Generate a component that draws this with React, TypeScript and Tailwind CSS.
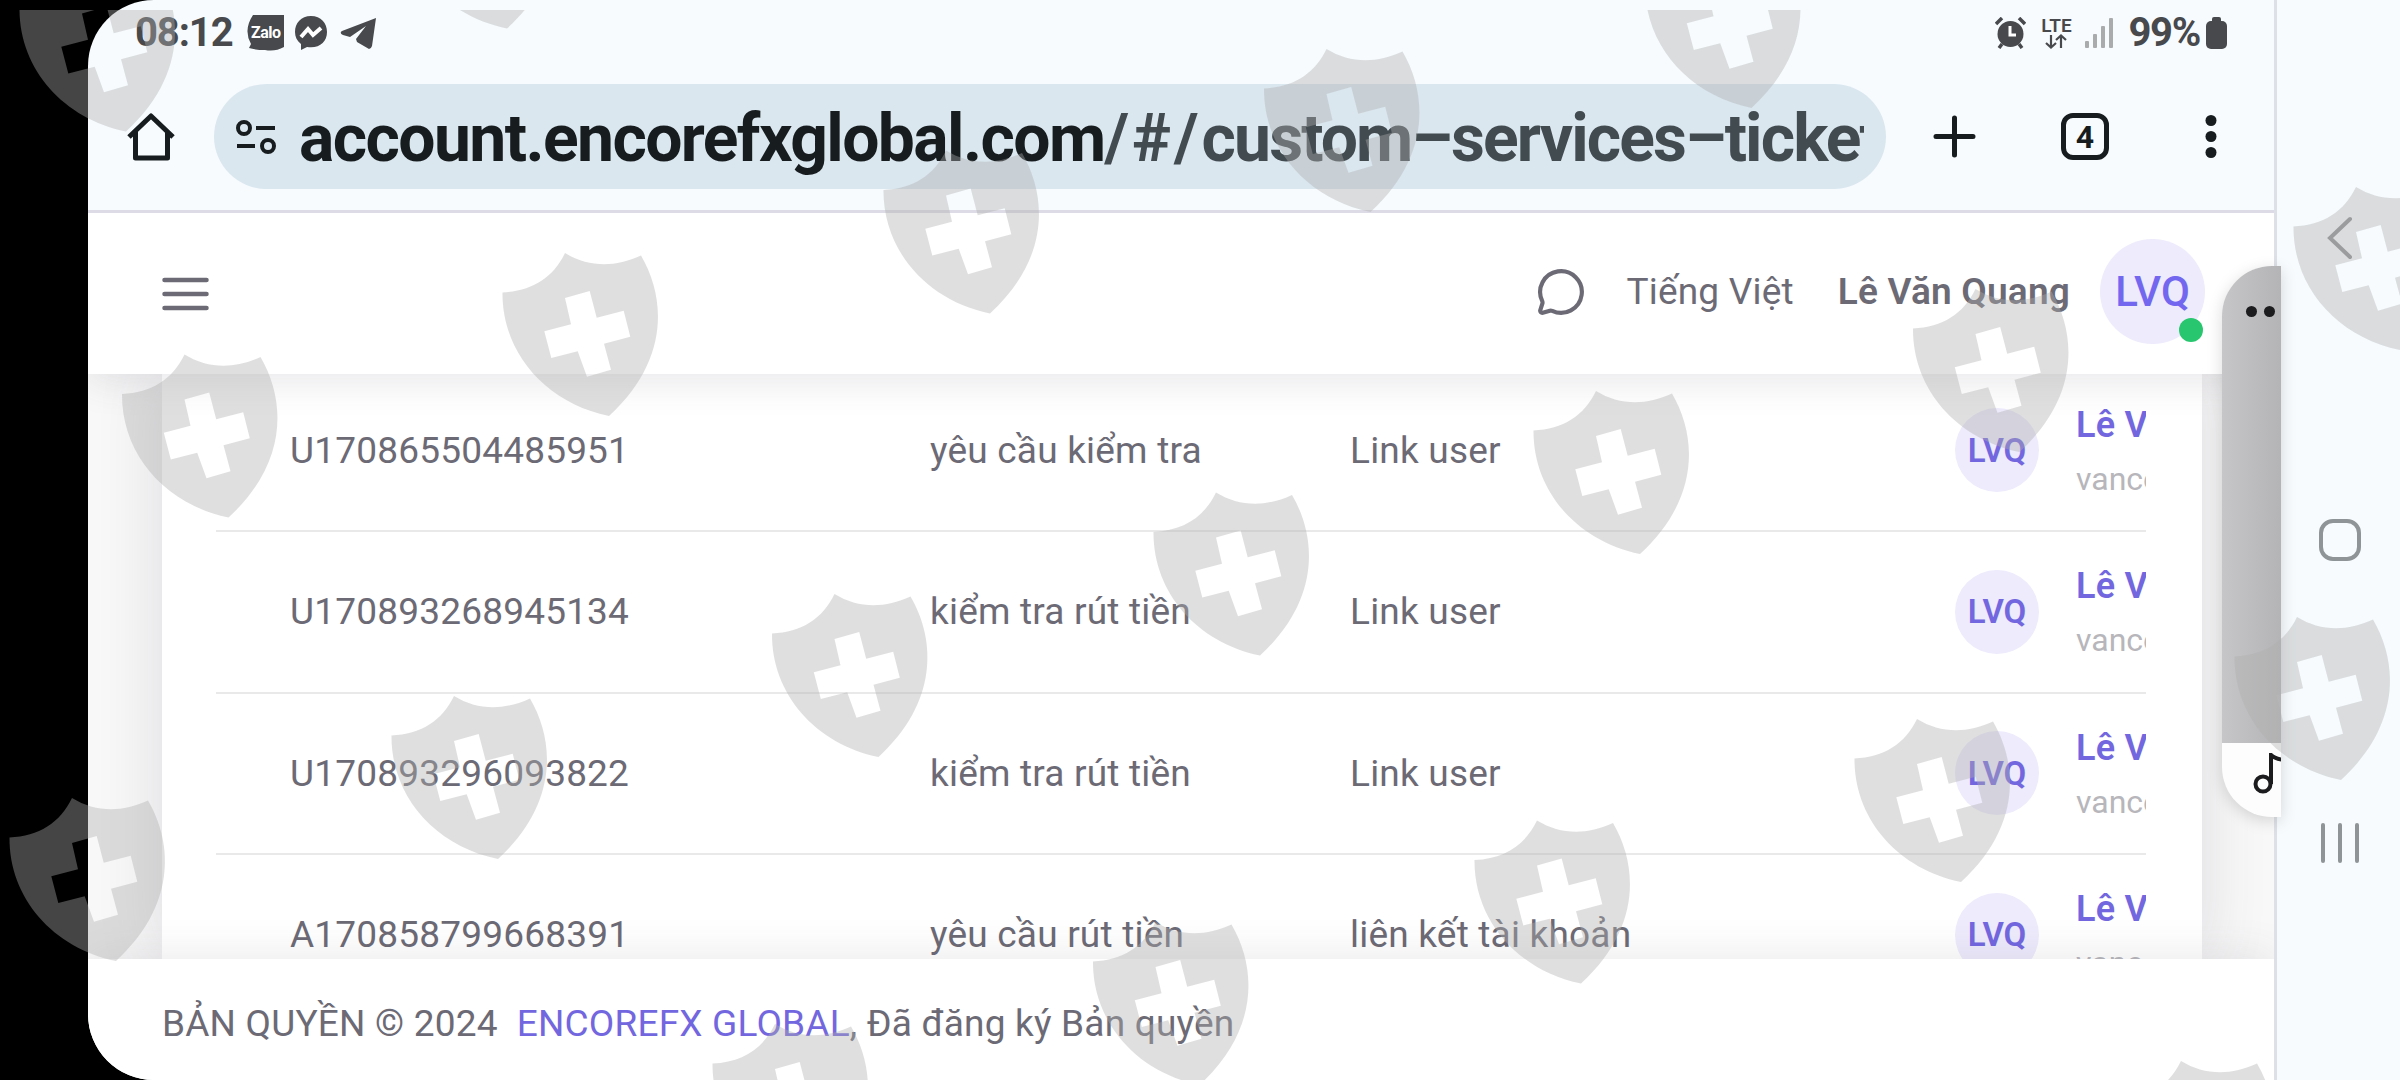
import { MessageCircle } from "lucide-react";

interface Ticket {
  id: string;
  subject: string;
  category: string;
}

const tickets: Ticket[] = [
  { id: "U170865504485951", subject: "yêu cầu kiểm tra", category: "Link user" },
  { id: "U170893268945134", subject: "kiểm tra rút tiền", category: "Link user" },
  { id: "U170893296093822", subject: "kiểm tra rút tiền", category: "Link user" },
  { id: "A170858799668391", subject: "yêu cầu rút tiền", category: "liên kết tài khoản" },
];

// bottom tip of every shield, in screen pixels
const shields = [
  [126, 131.5], [507, 28.5], [1751.5, 108],
  [228.5, 517.5], [609, 416], [990, 313.5], [1370.5, 212],
  [116, 961], [498, 859], [878.5, 757], [1260, 655.5], [1640, 554], [2019.5, 452], [2400, 350],
  [819, 1187], [1199.5, 1085], [1581, 983.5], [1961, 882], [2341, 780],
  [2225, 1224],
];

const ShieldPattern = () => (
  <svg className="pointer-events-none absolute inset-0 z-30 h-[1080px] w-[2400px]" viewBox="0 0 2400 1080">
    <defs>
      <clipPath id="below-edge">
        <rect x="0" y="10" width="2400" height="1070" />
      </clipPath>
      <path
        id="shield"
        fillRule="evenodd"
        d="M12.500 52.500C42 51 63 38 75 13C98 27 124 28 151 15.500C177 60 178 122 119 176C56 163 12 113 12.500 52.500ZM75 58L81 84.300L54.300 91.300L61.300 118L87.700 111.300L97 136.700L121 129.700L114 103.700L140.300 96.700L133.700 70.700L106.700 77.700L99.700 51Z"
      />
    </defs>
    <g clipPath="url(#below-edge)" fill="#aeaeae" fillOpacity="0.396">
      {shields.map(([x, y]) => (
        <use key={`${x}-${y}`} href="#shield" x={x - 119} y={y - 176} />
      ))}
    </g>
  </svg>
);

const StatusBar = () => (
  <div className="flex h-[66px] items-center px-[47px] text-[#47494c]">
    <span className="w-[98px] text-[40px] font-bold leading-none tracking-[-1.1px]">08:12</span>
    <svg className="ml-[14px] h-9 w-[37px]" viewBox="0 0 37 36">
      <path fill="#47494c" d="M6 0H37V32Q28 37 18 35Q9 35 2 33L4 29Q-4 15 6 0Z" />
      <text x="4" y="23" fill="#fff" fontSize="16" fontWeight="700" textLength="30">Zalo</text>
    </svg>
    <svg className="ml-[10px] h-[34px] w-[34px]" viewBox="0 0 34 34">
      <path fill="#47494c" d="M17 0C7 0 1 7 1 16C1 21 3 25 7 28V34L13 31C25 33 33 26 33 16C33 7 27 0 17 0Z" />
      <path fill="none" stroke="#fff" strokeWidth="4" d="M7 21L14 13L19 19L27 12" />
    </svg>
    <svg className="ml-[12px] h-[34px] w-[37px]" viewBox="0 0 37 34">
      <path fill="#47494c" d="M36 2L2 15Q-1 17 3 19L10 21L26 10L16 23L17 26L29 33Q31 33 32 30Z" />
    </svg>
    <div className="ml-auto flex items-center">
      <svg className="h-8 w-[31px]" viewBox="0 0 31 32">
        <circle cx="15.500" cy="17" r="13" fill="#47494c" />
        <path fill="none" stroke="#47494c" strokeWidth="3.500" d="M1 7L7 1M30 7L24 1M7 27L4 31M24 27L27 31" />
        <path fill="none" stroke="#fff" strokeWidth="3" d="M15 9V18H21" />
      </svg>
      <div className="ml-[14px] flex w-[32px] flex-col items-center">
        <span className="text-[19px] font-semibold leading-[17px]">LTE</span>
        <svg className="h-[15px] w-[24px]" viewBox="0 0 24 15">
          <path fill="none" stroke="#47494c" strokeWidth="2.200" d="M7 1V13M2 9L7 13.500L12 9M17 14V2M12 6L17 1.500L22 6" />
        </svg>
      </div>
      <svg className="ml-[13px] h-[30px] w-[28px]" viewBox="0 0 28 30" fill="#a9abad">
        <rect x="0" y="23" width="4" height="7" rx="1" />
        <rect x="8" y="16" width="4" height="14" rx="1" />
        <rect x="16" y="8" width="4" height="22" rx="1" />
        <rect x="24" y="0" width="4" height="30" rx="1" />
      </svg>
      <span className="ml-[15px] text-[40px] font-bold leading-none tracking-[-1.3px]">99%</span>
      <svg className="ml-[6px] h-8 w-[21px]" viewBox="0 0 21 32" fill="#47494c">
        <rect x="6" y="0" width="9" height="8" rx="2" />
        <rect x="0" y="4" width="21" height="28" rx="5" />
      </svg>
    </div>
  </div>
);

const AddressBar = () => (
  <div className="relative z-20 flex h-[144px] items-start bg-[#f7fbfe] pt-[18px] text-[#171c1f]">
    <svg className="ml-[39px] mt-[28px] h-[50px] w-[48px]" viewBox="0 0 48 50" fill="none" stroke="#171c1f" strokeWidth="5" strokeLinejoin="round">
      <path d="M2 25L24 4L46 25M8.500 20V46H40.500V20" />
    </svg>
    <div className="ml-[39px] flex h-[105px] w-[1672px] items-center rounded-full bg-[#dae7ef]">
      <svg className="ml-[22px] h-[34px] w-[40px]" viewBox="0 0 40 34" fill="none" stroke="#171c1f" strokeWidth="4">
        <circle cx="8" cy="8" r="6" />
        <path d="M20 8H39M1 26H19" />
        <circle cx="32" cy="26" r="6" />
      </svg>
      <div className="ml-[23px] mt-1 w-[1565px] overflow-hidden whitespace-nowrap text-[66px] font-bold leading-[80px] tracking-[-1.6px]">
        account.encorefxglobal.com
        <span className="tracking-[-1.9px] text-[#424b50]">
          <span className="tracking-[3px]">/#/</span>custom–services–tickets
        </span>
      </div>
    </div>
    <svg className="ml-[47px] mt-[31px] h-[43px] w-[43px]" viewBox="0 0 43 43" stroke="#171c1f" strokeWidth="5" strokeLinecap="round">
      <path d="M21.500 3V40M3 21.500H40" />
    </svg>
    <div className="ml-[85px] mt-[29px] flex h-[47px] w-[48px] items-center justify-center rounded-[12px] border-[5px] border-[#171c1f] text-[32px] font-bold leading-none">4</div>
    <svg className="ml-[96px] mt-[31px] h-[43px] w-[12px]" viewBox="0 0 12 43" fill="#171c1f">
      <circle cx="6" cy="5.500" r="5.500" />
      <circle cx="6" cy="21.500" r="5.500" />
      <circle cx="6" cy="37.500" r="5.500" />
    </svg>
  </div>
);

const TicketRow = ({ ticket }: { ticket: Ticket }) => (
  <div className="flex h-[161.500px] shrink-0 items-center overflow-hidden border-b-2 border-[#e9e9ea] pl-[74px] text-[37px] tracking-[0.2px] text-[#6c6a75]">
    <span className="w-[640px] shrink-0">{ticket.id}</span>
    <span className="w-[420px] shrink-0">{ticket.subject}</span>
    <span className="w-[605px] shrink-0">{ticket.category}</span>
    <span className="flex h-[84px] w-[84px] shrink-0 items-center justify-center rounded-full bg-[#edebfc] text-[33px] font-semibold tracking-normal text-[#7367e0]">LVQ</span>
    <span className="ml-[37px] flex shrink-0 flex-col whitespace-nowrap pt-px">
      <span className="h-[56px] text-[36px] font-semibold leading-[58px] text-[#7367e0]">Lê Văn Quang</span>
      <span className="text-[32px] leading-[54px] tracking-normal text-[#b7b6bb]">vance</span>
    </span>
  </div>
);

export default function App() {
  return (
    <div className="relative flex h-[1080px] w-[2400px] overflow-hidden bg-black font-['Roboto',sans-serif]">
      <div className="ml-[88px] flex flex-1 overflow-hidden rounded-l-[66px] bg-[#f7fbfe]">
        <div className="flex w-[2186px] shrink-0 flex-col">
          <StatusBar />
          <AddressBar />
          <header className="relative z-10 flex h-[164px] shrink-0 items-center border-t-[3px] border-[#dddbe5] bg-white pb-1 pl-[71px] pr-[69px] text-[37px] tracking-[0.2px] text-[#6c6a75] shadow-[0_6px_36px_rgba(75,70,92,0.14)]">
            <svg className="mt-1 h-[36px] w-[52px]" viewBox="0 0 52 36" stroke="#6c6a75" strokeWidth="4.500" strokeLinecap="round">
              <path d="M5.500 4H47.500M5.500 18H47.500M5.500 32H47.500" />
            </svg>
            <MessageCircle className="ml-auto" size={50} strokeWidth={2} />
            <span className="ml-[40px]">Tiếng Việt</span>
            <span className="ml-[44px] font-semibold">Lê Văn Quang</span>
            <span className="relative ml-[30px] flex h-[105px] w-[105px] items-center justify-center rounded-full bg-[#edebfc] text-[42px] font-medium tracking-normal text-[#7367f0]">
              LVQ
              <span className="absolute bottom-[2px] right-[2px] h-6 w-6 rounded-full bg-[#28c76f]" />
            </span>
          </header>
          <main className="flex h-[585px] shrink-0 overflow-hidden bg-[#f8f8f8] pl-[74px]">
            <div className="-mt-[3.500px] flex w-[2040px] shrink-0 flex-col overflow-hidden bg-white pl-[54px] pr-[56px] shadow-[0_0_60px_rgba(75,70,92,0.16)]">
              {tickets.map((ticket) => (
                <TicketRow key={ticket.id} ticket={ticket} />
              ))}
            </div>
          </main>
          <footer className="relative flex h-[121px] shrink-0 items-center bg-white pl-[74px] pt-2 text-[37px] tracking-[0.2px] text-[#6c6a75] shadow-[0_-6px_36px_rgba(75,70,92,0.1)]">
            <span>BẢN QUYỀN © 2024</span>
            <span className="ml-[19px] text-[#7367e0]">ENCOREFX GLOBAL</span>
            <span className="whitespace-pre">, Đã đăng ký Bản quyền</span>
          </footer>
        </div>
        <nav className="relative z-20 flex flex-1 flex-col items-center border-l-[3px] border-[#dde1e7] bg-[#f7fbfe] pl-[2px]">
          <svg className="mt-[216px] h-[44px] w-[28px]" viewBox="0 0 28 44" fill="none" stroke="#8f9193" strokeWidth="4" strokeLinecap="round">
            <path d="M24 3L4 22L24 41" />
          </svg>
          <div className="mt-[259px] h-[42px] w-[42px] rounded-[14px] border-4 border-[#8f9497]" />
          <div className="mt-[262px] flex h-[40px] gap-[13px]">
            <span className="w-[4px] rounded bg-[#8f9497]" />
            <span className="w-[4px] rounded bg-[#8f9497]" />
            <span className="w-[4px] rounded bg-[#8f9497]" />
          </div>
        </nav>
      </div>

      {/* floating window docked at the edge of the screen */}
      <div className="absolute left-[2222px] top-[266px] z-20 h-[551px] w-[59px] overflow-hidden rounded-bl-[50px] rounded-tl-[50px] bg-[#fdfdfd] shadow-[0_4px_16px_rgba(0,0,0,0.15)]">
        <div className="flex h-[477px] gap-[7px] bg-linear-to-r from-[#c6c6c8] to-[#b4b4b6] pl-[24px] pt-[40px]">
          <span className="h-[11px] w-[11px] shrink-0 rounded-full bg-[#1c1c1e]" />
          <span className="h-[11px] w-[11px] shrink-0 rounded-full bg-[#1c1c1e]" />
        </div>
        <svg className="ml-[31px] mt-[10px] h-[41px] w-[34px]" viewBox="0 0 34 41" fill="none" stroke="#1c1c1e" strokeWidth="4">
          <circle cx="10" cy="31" r="7.500" />
          <path d="M18 31V2Q22 6 32 7" />
        </svg>
      </div>
      <ShieldPattern />
    </div>
  );
}
